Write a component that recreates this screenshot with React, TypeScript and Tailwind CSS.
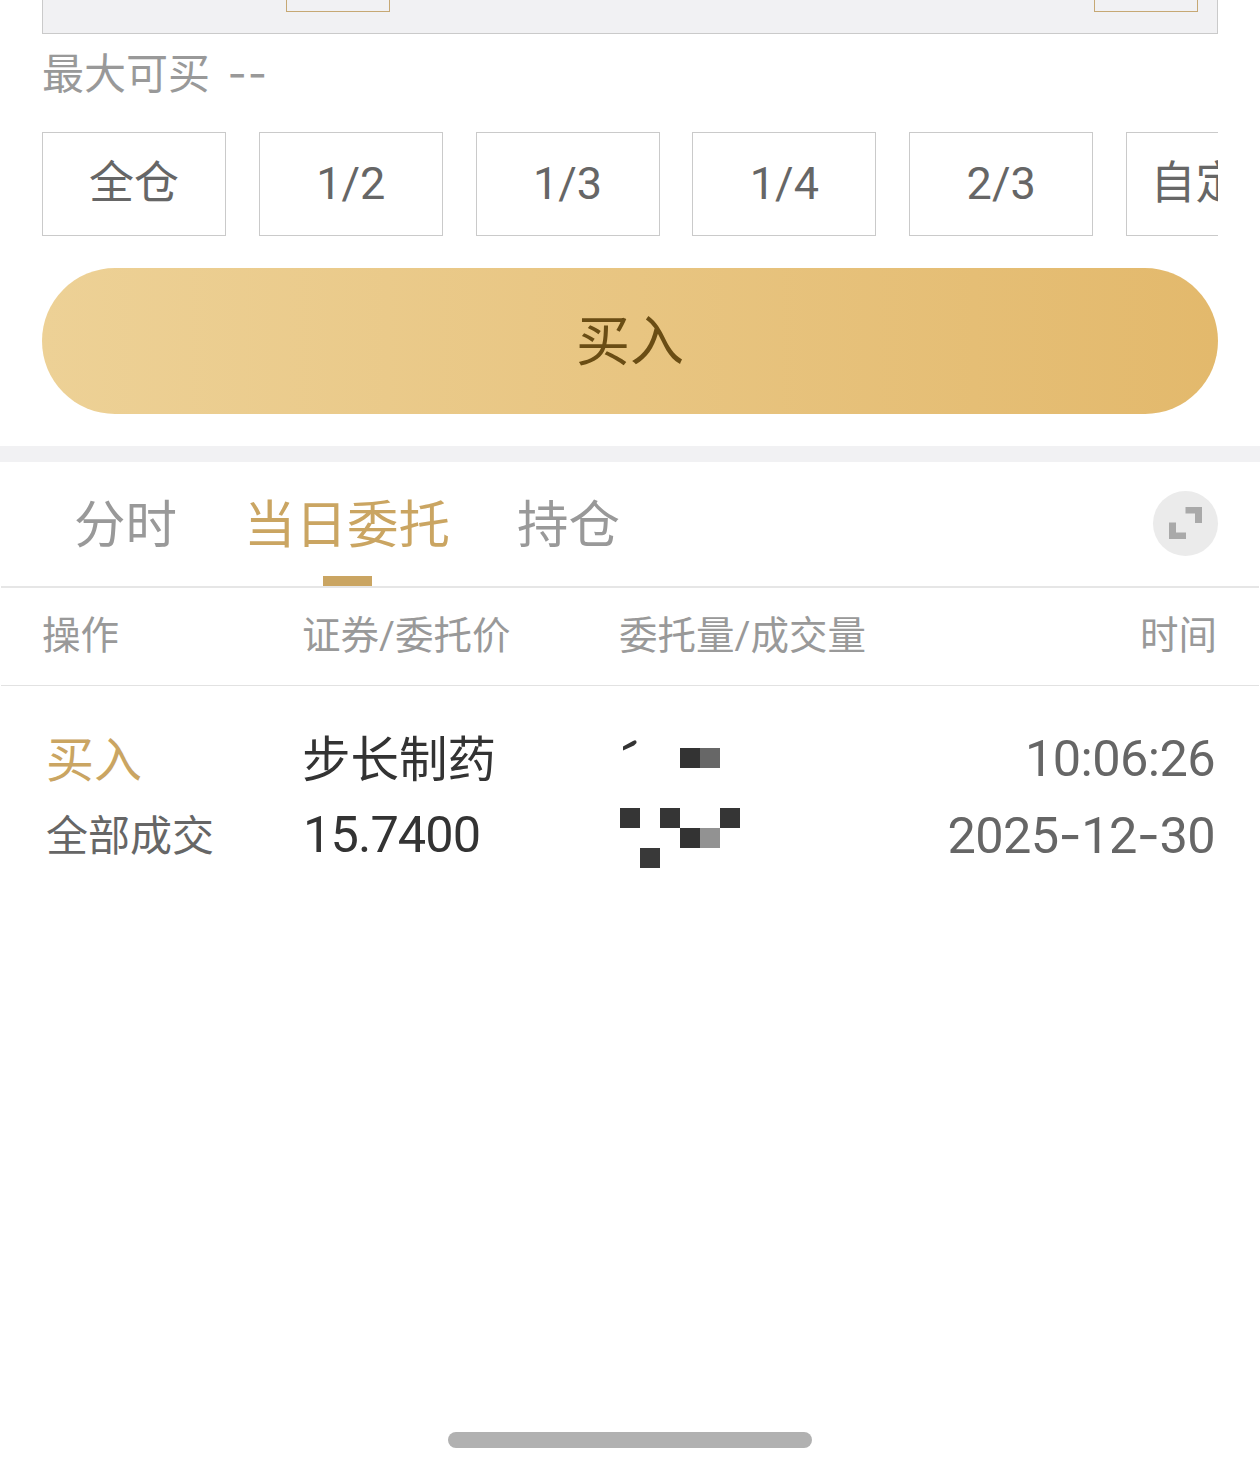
import clsx from "clsx";

const positions = ["全仓", "1/2", "1/3", "1/4", "2/3", "自定义"];

const tabs = [
  { label: "分时", active: false },
  { label: "当日委托", active: true },
  { label: "持仓", active: false },
];

// Masked amounts, one entry per 20px block
const mosaic = [
  { x: 60, y: 10, fill: "#333333" },
  { x: 80, y: 10, fill: "#676767" },
  { x: 0, y: 70, fill: "#353535" },
  { x: 40, y: 70, fill: "#353535" },
  { x: 100, y: 70, fill: "#353535" },
  { x: 60, y: 90, fill: "#333333" },
  { x: 80, y: 90, fill: "#929292" },
  { x: 20, y: 110, fill: "#393939" },
];

function PriceStepper() {
  return (
    <div className="mx-[42px] flex h-[34px] items-start justify-between border border-t-0 border-[#cacaca] bg-[#f1f1f3] pl-[243px] pr-[19px]">
      <div className="h-3 w-[104px] border border-t-0 border-[#c6a874]" />
      <div className="h-3 w-[104px] border border-t-0 border-[#c6a874]" />
    </div>
  );
}

function PositionPicker() {
  return (
    <div className="mx-[42px] flex gap-[32.8px] overflow-hidden">
      {positions.map((label) => (
        <button
          key={label}
          className="h-[104px] w-[184px] shrink-0 whitespace-nowrap border border-[#cacaca] text-[45px] leading-[100px] text-[#666666]"
        >
          {label}
        </button>
      ))}
    </div>
  );
}

function Tabs() {
  return (
    <div className="mx-px flex h-[126px] items-start justify-between border-b-2 border-[#e6e6e6] pl-[73px] pr-[41px]">
      <div className="flex h-full gap-[67px]">
        {tabs.map(({ label, active }) => (
          <button
            key={label}
            className={clsx(
              "flex h-full flex-col items-center justify-between text-[51.5px] leading-[128px]",
              active ? "text-[#caa562]" : "text-[#999999]"
            )}
          >
            <span className="h-[114px]">{label}</span>
            {active && <span className="h-2.5 w-[49px] bg-[#caa562]" />}
          </button>
        ))}
      </div>
      <button className="mt-[29px] flex size-[65px] items-center justify-center rounded-full bg-[#ebebeb]">
        <svg width="33" height="32" viewBox="0 0 33 32" fill="#a9a9a9" className="mb-0.5">
          <path d="M16.500 0H33V16H26V6.500H16.500Z" />
          <path d="M0 15.500H7V25.500H17V32H0Z" />
        </svg>
      </button>
    </div>
  );
}

function MaskedAmount() {
  return (
    <svg width="120" height="130" viewBox="0 0 120 130" className="block">
      <path d="M3 8.500 L13 3 Q17 1 16.500 5 L14 7.500 L3 12.500Z" fill="#333333" />
      {mosaic.map(({ x, y, fill }) => (
        <rect key={`${x}-${y}`} x={x} y={y} width="20" height="20" fill={fill} />
      ))}
    </svg>
  );
}

// Roboto's hyphen is too short next to its figures
function Dash() {
  return <span className="font-['Inter']">-</span>;
}

function OrderTable() {
  return (
    <div>
      <div className="mx-px grid h-[98px] grid-cols-[260px_317px_1fr_auto] border-b border-[#e2e2e2] pl-[41px] pr-[42px] text-[38.5px] leading-[96px] text-[#999999]">
        <span>操作</span>
        <span>证券/委托价</span>
        <span>委托量/成交量</span>
        <span>时间</span>
      </div>
      <div className="grid grid-cols-[256px_318px_1fr_auto] pl-[46px] pr-[45px] pt-[34px] leading-[76px] text-[#666666]">
        <div className="pt-[3px]">
          <div className="text-[48px] text-[#caa562]">买入</div>
          <div className="text-[42px]">全部成交</div>
        </div>
        <div className="text-[#333333]">
          <div className="h-[76px] pt-[3px] text-[48.5px]">步长制药</div>
          <div className="pt-px pl-px text-[50.5px] tracking-[-0.9px]">15.7400</div>
        </div>
        <div className="pt-[18px]">
          <MaskedAmount />
        </div>
        <div className="pt-px text-right text-[50.5px] tracking-[-0.6px]">
          <div>10:06:26</div>
          <div>
            2025
            <Dash />
            12
            <Dash />
            30
          </div>
        </div>
      </div>
    </div>
  );
}

export default function App() {
  return (
    <div className="flex h-[1467px] w-[1260px] flex-col overflow-hidden bg-white font-['Roboto','Noto_Sans_CJK_SC',sans-serif]">
      <PriceStepper />
      <div className="h-[98px] px-[42px] text-[42px] leading-[80px] text-[#999999]">
        最大可买{" "}
        <span className="ml-[7px] tracking-[1px]">
          <Dash />
          <Dash />
        </span>
      </div>
      <PositionPicker />
      <button className="mx-[42px] mt-8 h-[146px] rounded-full bg-linear-to-r from-[#edd196] to-[#e3b96c] pt-[3px] text-[54px] leading-[143px] text-[#6a4d14]">
        买入
      </button>
      <div className="mt-8 h-4 shrink-0 bg-[#f1f1f3]" />
      <Tabs />
      <OrderTable />
      <div className="mx-auto mb-[19px] mt-auto h-4 w-[364px] rounded-full bg-[#b1b1b1]" />
    </div>
  );
}
